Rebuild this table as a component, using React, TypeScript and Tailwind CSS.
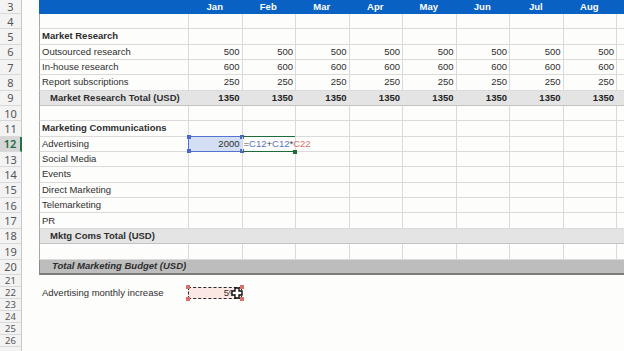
import React from "react";

const months = ["Jan", "Feb", "Mar", "Apr", "May", "Jun", "Jul", "Aug"];
const font = "font-['Liberation_Sans',Arial,sans-serif]";

type RowDef = {
  n: number;
  kind: "header" | "blank" | "section" | "data" | "total" | "grand" | "adv";
  label?: string;
  val?: string;
};

const rows: RowDef[] = [
  { n: 3, kind: "header" },
  { n: 4, kind: "blank" },
  { n: 5, kind: "section", label: "Market Research" },
  { n: 6, kind: "data", label: "Outsourced research", val: "500" },
  { n: 7, kind: "data", label: "In-house research", val: "600" },
  { n: 8, kind: "data", label: "Report subscriptions", val: "250" },
  { n: 9, kind: "total", label: "Market Research Total (USD)", val: "1350" },
  { n: 10, kind: "blank" },
  { n: 11, kind: "section", label: "Marketing Communications" },
  { n: 12, kind: "adv", label: "Advertising" },
  { n: 13, kind: "data", label: "Social Media" },
  { n: 14, kind: "data", label: "Events" },
  { n: 15, kind: "data", label: "Direct Marketing" },
  { n: 16, kind: "data", label: "Telemarketing" },
  { n: 17, kind: "data", label: "PR" },
  { n: 18, kind: "total", label: "Mktg Coms Total (USD)" },
  { n: 19, kind: "blank" },
  { n: 20, kind: "grand", label: "Total Marketing Budget (USD)" },
];

function RowHead({
  n,
  active,
  h,
  small,
}: {
  n?: number;
  active?: boolean;
  h: string;
  small?: boolean;
}) {
  return (
    <div
      className={`${h} w-[22px] shrink-0 flex items-center justify-center border-b border-[#d9d9d9] font-['Noto_Sans',sans-serif] ${
        small ? "text-[9.5px]" : "text-[11px]"
      } leading-none ${
        active
          ? "bg-[#d6d6d6] text-[#1d6b40] font-semibold border-r-2 border-r-[#217346]"
          : "bg-[#f3f3f3] text-[#555] border-r border-r-[#c8c8c8]"
      }`}
    >
      {n}
    </div>
  );
}

function Corner({ pos, color }: { pos: string; color: string }) {
  return <div className={`absolute w-[4px] h-[4px] ${pos} ${color}`} />;
}

function TableRow({ r }: { r: RowDef }) {
  const h = r.kind === "header" ? "h-[14px]" : "h-[15.35px]";
  let rowCls = "";
  let cellBorder = "border-[#dadada]";
  if (r.kind === "header") {
    rowCls = "bg-[#0a61c4] border-l border-l-[#0a61c4]";
    cellBorder = "border-transparent";
  } else if (r.kind === "total") {
    rowCls = "bg-[#e4e4e4] border-b border-b-[#c4c4c4] border-l border-l-[#a8a8a8]";
    cellBorder = "border-transparent";
  } else if (r.kind === "grand") {
    rowCls = "bg-[#bdbdbd] border-b-2 border-b-[#7c7c7c] border-l border-l-[#8a8a8a]";
    cellBorder = "border-transparent";
  } else {
    rowCls = "bg-[#fdfdfc] border-b border-b-[#dadada] border-l border-l-[#a8a8a8]";
  }

  const labelCls =
    r.kind === "section"
      ? "font-bold pl-[2px]"
      : r.kind === "total"
      ? "font-bold pl-[10px]"
      : r.kind === "grand"
      ? "font-bold italic pl-[12px]"
      : "pl-[2px]";

  return (
    <div className={`flex ${h}`}>
      <RowHead n={r.n} h={h} active={r.n === 12} />
      <div className="w-[17px] shrink-0 bg-[#fdfdfc]" />
      <div className={`flex flex-1 min-w-0 ${rowCls} ${font} text-[9.5px] text-[#2e2e2e]`}>
        <div className={`w-[148px] shrink-0 flex items-center whitespace-nowrap ${labelCls}`}>
          {r.label}
        </div>
        {months.map((m, i) => {
          if (r.kind === "header") {
            return (
              <div
                key={m}
                className="w-[53.5px] shrink-0 flex items-center justify-center text-white font-bold"
              >
                {m}
              </div>
            );
          }
          if (r.kind === "adv" && i === 0) {
            return (
              <div
                key={m}
                className={`relative w-[53.5px] shrink-0 border-l ${cellBorder} bg-[#d4def4] flex items-center justify-end pr-[2px]`}
              >
                <div className="absolute inset-x-[-1px] top-[-1px] bottom-[-1px] border border-[#5674cf]" />
                <Corner pos="left-[-2px] top-[-2px]" color="bg-[#4a68c6]" />
                <Corner pos="right-[-2px] top-[-2px]" color="bg-[#4a68c6]" />
                <Corner pos="left-[-2px] bottom-[-2px]" color="bg-[#4a68c6]" />
                <Corner pos="right-[-2px] bottom-[-2px]" color="bg-[#4a68c6]" />
                2000
              </div>
            );
          }
          if (r.kind === "adv" && i === 1) {
            return (
              <div
                key={m}
                className={`relative z-10 w-[53.5px] shrink-0 border-l ${cellBorder} flex items-center pl-[1px] whitespace-nowrap`}
              >
                <div className="absolute left-0 right-0 top-[-1px] h-[1.5px] bg-[#1f6b3d]" />
                <div className="absolute left-0 right-0 bottom-[-1px] h-[1.5px] bg-[#1f6b3d]" />
                <div className="absolute right-[-2px] bottom-[-2.5px] w-[4px] h-[4px] bg-[#1f6b3d]" />
                <span className="text-[#555]">=</span>
                <span className="text-[#5b74c4]">C12</span>
                <span className="text-[#444]">+</span>
                <span className="text-[#5b74c4]">C12</span>
                <span className="text-[#444]">*</span>
                <span className="text-[#d9706b]">C22</span>
              </div>
            );
          }
          return (
            <div
              key={m}
              className={`w-[53.5px] shrink-0 border-l ${cellBorder} flex items-center justify-end pr-[2px] ${
                r.kind === "total" ? "font-bold text-[#222]" : ""
              }`}
            >
              {r.val ?? ""}
            </div>
          );
        })}
        <div className={`flex-1 border-l ${cellBorder}`} />
      </div>
    </div>
  );
}

function Cursor() {
  return (
    <svg
      className="absolute right-[-1px] top-[0px]"
      width="12"
      height="12"
      viewBox="0 0 12 12"
    >
      <path
        d="M4 1 H8 V4 H11 V8 H8 V11 H4 V8 H1 V4 H4 Z"
        fill="#ffffff"
        stroke="#111"
        strokeWidth="1.4"
        strokeLinejoin="miter"
      />
    </svg>
  );
}

function LowerRow({ n, label }: { n: number; label: boolean }) {
  const h = "h-[12px]";
  return (
    <div className={`flex ${h}`}>
      <RowHead n={label ? n : undefined} h={h} small />
      <div className="w-[17px] shrink-0" />
      <div className={`flex flex-1 min-w-0 ${font} text-[9.5px] text-[#2e2e2e]`}>
        {n === 22 && (
          <>
            <div className="w-[149px] shrink-0 flex items-center pl-[3px] whitespace-nowrap">
              Advertising monthly increase
            </div>
            <div className="relative w-[53.5px] shrink-0 bg-[#fbe8e4] flex items-center justify-end pr-[4px]">
              <div className="absolute inset-0 border-[1.5px] border-dashed border-[#2a2a2a]" />
              <Corner pos="left-[-2px] top-[-2px]" color="bg-[#d9706b]" />
              <Corner pos="right-[-2px] top-[-2px]" color="bg-[#d9706b]" />
              <Corner pos="left-[-2px] bottom-[-2px]" color="bg-[#d9706b]" />
              <Corner pos="right-[-2px] bottom-[-2px]" color="bg-[#d9706b]" />
              5%
              <Cursor />
            </div>
          </>
        )}
      </div>
    </div>
  );
}

export default function App() {
  return (
    <div className="w-[624px] h-[351px] overflow-hidden bg-[#fdfdfc]">
      {rows.map((r) => (
        <TableRow key={r.n} r={r} />
      ))}
      {[21, 22, 23, 24, 25, 26, 27].map((n) => (
        <LowerRow key={n} n={n} label={n !== 27} />
      ))}
    </div>
  );
}
